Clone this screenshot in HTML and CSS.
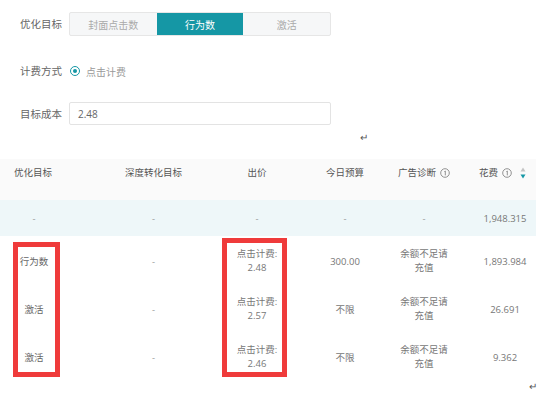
FILE: index.html
```html
<!DOCTYPE html>
<html lang="zh">
<head>
<meta charset="utf-8">
<link rel="stylesheet" href="styles.css">
</head>
<body>
<div class="form">
  <div class="row r1">
    <span class="label">优化目标</span>
    <div class="seg">
      <span class="seg-item">封面点击数</span>
      <span class="seg-item active">行为数</span>
      <span class="seg-item">激活</span>
    </div>
  </div>
  <div class="row r2">
    <span class="label">计费方式</span>
    <span class="radio"><span class="dot"></span></span>
    <span class="radio-text">点击计费</span>
  </div>
  <div class="row r3">
    <span class="label">目标成本</span>
    <div class="input">2.48</div>
  </div>
  <div class="ret">↵</div>
</div>

<div class="table">
  <div class="thead grid">
    <div class="c1 left">优化目标</div>
    <div class="c2">深度转化目标</div>
    <div class="c3">出价</div>
    <div class="c4">今日预算</div>
    <div class="c5">广告诊断<svg class="info" viewBox="0 0 10 10"><circle cx="5" cy="5" r="4.3" fill="none" stroke="#777" stroke-width="0.8"/><path d="M4.4 3.6 L5.3 3 L5.3 7.4" fill="none" stroke="#777" stroke-width="0.8"/></svg></div>
    <div class="c6">花费<svg class="info" viewBox="0 0 10 10"><circle cx="5" cy="5" r="4.3" fill="none" stroke="#777" stroke-width="0.8"/><path d="M4.4 3.6 L5.3 3 L5.3 7.4" fill="none" stroke="#777" stroke-width="0.8"/></svg><svg class="sort" viewBox="0 0 6 12"><path d="M3 0.5 L5.5 4.5 L0.5 4.5 Z" fill="#c4c4c4"/><path d="M3 11.5 L5.5 7.5 L0.5 7.5 Z" fill="#1597a5"/></svg></div>
  </div>
  <div class="summary grid">
    <div class="c1">-</div>
    <div class="c2">-</div>
    <div class="c3">-</div>
    <div class="c4">-</div>
    <div class="c5">-</div>
    <div class="c6">1,948.315</div>
  </div>
  <div class="body">
    <div class="drow grid">
      <div class="c1">行为数</div>
      <div class="c2">-</div>
      <div class="c3"><span class="wrap">点击计费: 2.48</span></div>
      <div class="c4">300.00</div>
      <div class="c5"><span class="wrap5">余额不足请充值</span></div>
      <div class="c6">1,893.984</div>
    </div>
    <div class="drow grid">
      <div class="c1">激活</div>
      <div class="c2">-</div>
      <div class="c3"><span class="wrap">点击计费: 2.57</span></div>
      <div class="c4">不限</div>
      <div class="c5"><span class="wrap5">余额不足请充值</span></div>
      <div class="c6">26.691</div>
    </div>
    <div class="drow grid">
      <div class="c1">激活</div>
      <div class="c2">-</div>
      <div class="c3"><span class="wrap">点击计费: 2.46</span></div>
      <div class="c4">不限</div>
      <div class="c5"><span class="wrap5">余额不足请充值</span></div>
      <div class="c6">9.362</div>
    </div>
    <div class="mark mark-left"></div>
    <div class="mark mark-right"></div>
    <div class="ret2">↵</div>
  </div>
</div>
</body>
</html>
```

FILE: styles.css
```css
html, body {
  margin: 0;
  padding: 0;
  background: #fff;
  width: 541px;
  height: 395px;
  overflow: hidden;
  font-family: "Open Sans", "Noto Sans CJK SC", sans-serif;
  color: #666;
}

.form {
  padding: 12px 0 0 20px;
}

.row {
  display: flex;
  align-items: center;
}

.label {
  width: 49px;
  font-size: 10.5px;
  color: #666;
  line-height: 16px;
}

.seg {
  display: flex;
  width: 262px;
  height: 24px;
  border: 1px solid #e6e6e6;
  box-sizing: border-box;
  border-radius: 2px;
  background: #f6f7f8;
  overflow: hidden;
}

.seg-item {
  flex: 1;
  display: flex;
  align-items: center;
  justify-content: center;
  font-size: 10px;
  color: #aaa;
}

.seg-item.active {
  background: #1597a5;
  color: #fff;
}

.r2 {
  margin-top: 27px;
  height: 16px;
}

.radio {
  width: 10px;
  height: 10px;
  box-sizing: border-box;
  border: 1px solid #1597a5;
  border-radius: 50%;
  display: flex;
  align-items: center;
  justify-content: center;
  margin-left: 1px;
}

.dot {
  width: 4px;
  height: 4px;
  border-radius: 50%;
  background: #1597a5;
}

.radio-text {
  margin-left: 6px;
  font-size: 10px;
  color: #999;
}

.r3 {
  margin-top: 23px;
}

.input {
  width: 262px;
  height: 23px;
  box-sizing: border-box;
  border: 1px solid #e3e3e3;
  border-radius: 2px;
  padding-left: 8px;
  font-size: 10px;
  color: #666;
  display: flex;
  align-items: center;
}

.ret {
  margin: 6px 0 0 340px;
  font-size: 10px;
  line-height: 12px;
  color: #555;
}

.table {
  margin-top: 16px;
  width: 536px;
  font-size: 9.5px;
}

.grid {
  display: grid;
  grid-template-columns: 94px 111px 96px 83px 80px 72px;
}

.grid > div {
  display: flex;
  justify-content: center;
  align-items: center;
  white-space: nowrap;
  text-align: center;
}

.grid .c1 { padding-right: 26px; }
.grid .c2 { padding-left: 8px; }
.grid .c3 { padding-left: 8px; }
.grid .c4 { padding-left: 5px; }
.grid .c6 { padding-left: 10px; }

.thead {
  background: #fafafa;
  height: 41px;
  align-items: start;
  color: #555;
}

.thead > div {
  padding-top: 7px;
  line-height: 14px;
}

.thead .c1.left {
  justify-content: flex-start;
  padding-left: 14px;
  padding-right: 0;
}

.thead .c6 {
  padding-left: 5px;
}

.info {
  width: 10px;
  height: 10px;
  margin-left: 4px;
}

.sort {
  width: 6px;
  height: 12px;
  margin-left: 8px;
}

.summary {
  background: #eef7f9;
  height: 36px;
  color: #999;
}

.summary .c6 {
  color: #777;
}

.body {
  position: relative;
  color: #777;
  padding-top: 1px;
}

.drow {
  height: 48px;
}

.drow .c1 { color: #666; }
.drow .c2 { color: #999; }

.wrap {
  white-space: normal;
  width: 48px;
  line-height: 14px;
}

.wrap5 {
  white-space: normal;
  width: 50px;
  line-height: 14px;
}

.mark {
  position: absolute;
  border: 5px solid #ef3b3b;
  box-sizing: border-box;
}

.mark-left {
  left: 13px;
  top: 6px;
  width: 47px;
  height: 135px;
}

.mark-right {
  left: 222px;
  top: 2px;
  width: 65px;
  height: 139px;
}

.ret2 {
  position: absolute;
  left: 529px;
  top: 143px;
  font-size: 10px;
  color: #555;
}
```
